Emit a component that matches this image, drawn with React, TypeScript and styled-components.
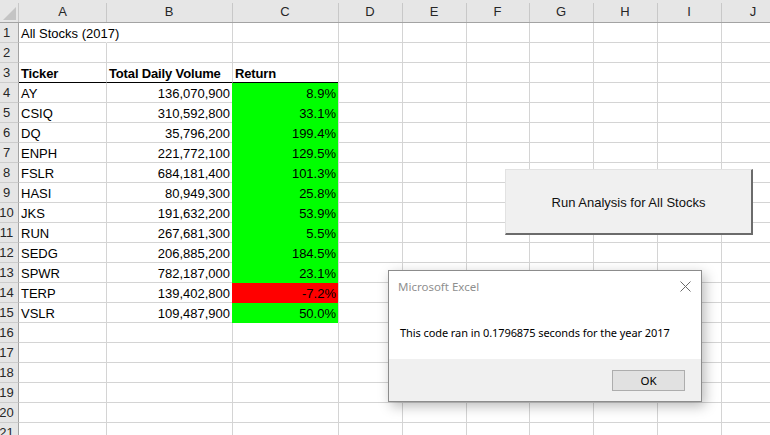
import React from "react";
import styled, { createGlobalStyle } from "styled-components";

const GlobalStyle = createGlobalStyle`
  html, body { margin: 0; padding: 0; background: #ffffff; overflow: hidden; }
  body { font-family: "Liberation Sans", Arial, sans-serif; }
  #root { width: 770px; height: 435px; }
`;

const GRID = "#d4d4d4";
const HEAD_BG = "#e6e6e6";
const HEAD_EDGE = "#a3a3a3";
const HEAD_SEP = "#c8c8c8";
const GREEN = "#00ff00";
const RED = "#ff0000";

type Col = { key: string; width: number };
const COLS: Col[] = [
  { key: "A", width: 87 },
  { key: "B", width: 126 },
  { key: "C", width: 106 },
  { key: "D", width: 64 },
  { key: "E", width: 64 },
  { key: "F", width: 63 },
  { key: "G", width: 64 },
  { key: "H", width: 64 },
  { key: "I", width: 64 },
  { key: "J", width: 64 },
];

type Stock = { ticker: string; volume: string; ret: string };
const STOCKS: Stock[] = [
  { ticker: "AY", volume: "136,070,900", ret: "8.9%" },
  { ticker: "CSIQ", volume: "310,592,800", ret: "33.1%" },
  { ticker: "DQ", volume: "35,796,200", ret: "199.4%" },
  { ticker: "ENPH", volume: "221,772,100", ret: "129.5%" },
  { ticker: "FSLR", volume: "684,181,400", ret: "101.3%" },
  { ticker: "HASI", volume: "80,949,300", ret: "25.8%" },
  { ticker: "JKS", volume: "191,632,200", ret: "53.9%" },
  { ticker: "RUN", volume: "267,681,300", ret: "5.5%" },
  { ticker: "SEDG", volume: "206,885,200", ret: "184.5%" },
  { ticker: "SPWR", volume: "782,187,000", ret: "23.1%" },
  { ticker: "TERP", volume: "139,402,800", ret: "-7.2%" },
  { ticker: "VSLR", volume: "109,487,900", ret: "50.0%" },
];

const Sheet = styled.div`
  position: relative;
  width: 770px;
  height: 435px;
  overflow: hidden;
  background: #ffffff;
`;

const HeaderRow = styled.div`
  display: flex;
  height: 23px;
`;

const Corner = styled.div`
  flex: 0 0 19px;
  width: 19px;
  min-width: 0;
  box-sizing: border-box;
  height: 23px;
  border-bottom: 1px solid ${HEAD_EDGE};
  background: linear-gradient(${HEAD_SEP}, ${HEAD_SEP}) right 3px / 1px calc(100% - 3px) no-repeat, ${HEAD_BG};
  display: flex;
  align-items: flex-start;
  padding: 7px 0 0 3px;
`;

const ColHeader = styled.div<{ $w: number; $first?: boolean }>`
  flex: 0 0 ${(p) => p.$w}px;
  width: ${(p) => p.$w}px;
  min-width: 0;
  box-sizing: border-box;
  height: 23px;
  border-bottom: 1px solid ${HEAD_EDGE};
  background: ${(p) =>
    p.$first
      ? HEAD_BG
      : `linear-gradient(${HEAD_SEP}, ${HEAD_SEP}) left 3px / 1px calc(100% - 3px) no-repeat, ${HEAD_BG}`};
  display: flex;
  align-items: center;
  justify-content: center;
  padding-top: 1px;
  font-size: 13px;
  color: #262626;
`;

const Row = styled.div`
  display: flex;
  height: 20px;
`;

const RowHeader = styled.div`
  flex: 0 0 19px;
  width: 19px;
  min-width: 0;
  box-sizing: border-box;
  height: 20px;
  background: ${HEAD_BG};
  border-right: 1px solid ${HEAD_EDGE};
  border-bottom: 1px solid #cccccc;
  display: flex;
  align-items: center;
  justify-content: center;
  padding-right: 5px;
  font-size: 13px;
  color: #262626;
  white-space: nowrap;
`;

const Cell = styled.div<{
  $w: number;
  $first?: boolean;
  $hideLeft?: boolean;
  $right?: boolean;
  $bold?: boolean;
  $fill?: string;
  $rule?: boolean;
}>`
  flex: 0 0 ${(p) => p.$w}px;
  width: ${(p) => p.$w}px;
  min-width: 0;
  box-sizing: border-box;
  height: 20px;
  border-left: ${(p) =>
    p.$first ? "none" : `1px solid ${p.$fill ? p.$fill : p.$hideLeft ? "transparent" : GRID}`};
  border-bottom: 1px solid ${(p) => (p.$rule ? "#000000" : p.$fill ? p.$fill : GRID)};
  background: ${(p) => p.$fill || "transparent"};
  display: flex;
  align-items: center;
  justify-content: ${(p) => (p.$right ? "flex-end" : "flex-start")};
  padding: 1px 2px 0 2px;
  font-size: 13px;
  font-weight: ${(p) => (p.$bold ? 700 : 400)};
  letter-spacing: ${(p) => (p.$bold ? "-0.15px" : "0")};
  color: #000000;
  white-space: nowrap;
  overflow: visible;
`;

const MacroButton = styled.div`
  position: absolute;
  left: 505px;
  top: 169px;
  width: 248px;
  height: 66px;
  box-sizing: border-box;
  background: #f0f0f0;
  border-top: 1px solid #e2e2e2;
  border-left: 1px solid #e2e2e2;
  border-right: 2px solid #6b6b6b;
  border-bottom: 2px solid #6b6b6b;
  display: flex;
  align-items: center;
  justify-content: center;
  font-size: 13px;
  color: #111111;
  padding-top: 1px;
`;

const Dialog = styled.div`
  position: absolute;
  left: 388px;
  top: 270px;
  width: 314px;
  height: 132px;
  box-sizing: border-box;
  border: 1px solid #8c8c8c;
  background: #ffffff;
  box-shadow: 3px 4px 12px rgba(0, 0, 0, 0.28);
  display: flex;
  flex-direction: column;
  font-family: "Noto Sans", "Liberation Sans", sans-serif;
`;

const TitleBar = styled.div`
  height: 30px;
  display: flex;
  align-items: center;
  justify-content: space-between;
  padding: 0 10px 0 9px;
  font-size: 11.5px;
  color: #8f8f8f;
`;

const DialogBody = styled.div`
  height: 58px;
  box-sizing: border-box;
  display: flex;
  align-items: center;
  padding: 4px 0 0 11px;
  font-size: 11px;
  letter-spacing: -0.08px;
  color: #000000;
`;

const DialogFooter = styled.div`
  height: 42px;
  box-sizing: border-box;
  background: #f0f0f0;
  display: flex;
  justify-content: flex-end;
  align-items: flex-start;
  padding: 11px 16px 0 0;
`;

const OkButton = styled.div`
  width: 73px;
  height: 21px;
  box-sizing: border-box;
  border: 1px solid #adadad;
  background: #e1e1e1;
  display: flex;
  align-items: center;
  justify-content: center;
  font-size: 11.5px;
  color: #000000;
`;

const CornerTriangle = () => (
  <svg width="13" height="13" viewBox="0 0 13 13">
    <polygon points="13,0 13,13 0,13" fill="#c4c4c4" />
  </svg>
);

const CloseIcon = () => (
  <svg width="11" height="11" viewBox="0 0 11 11">
    <path d="M0.5 0.5 L10.5 10.5 M10.5 0.5 L0.5 10.5" stroke="#6a6a6a" strokeWidth="1" fill="none" />
  </svg>
);

type CellSpec = {
  text?: string;
  right?: boolean;
  bold?: boolean;
  fill?: string;
  rule?: boolean;
  hideLeft?: boolean;
};

function buildRows(): CellSpec[][] {
  const rows: CellSpec[][] = [];
  rows.push([{ text: "All Stocks (2017)" }, { hideLeft: true }]);
  rows.push([]);
  rows.push([
    { text: "Ticker", bold: true, rule: true },
    { text: "Total Daily Volume", bold: true, rule: true },
    { text: "Return", bold: true, rule: true },
  ]);
  STOCKS.forEach((s) => {
    const neg = s.ret.startsWith("-");
    rows.push([
      { text: s.ticker },
      { text: s.volume, right: true },
      { text: s.ret, right: true, fill: neg ? RED : GREEN },
    ]);
  });
  for (let i = 0; i < 6; i++) rows.push([]);
  return rows;
}

export default function App() {
  const rows = buildRows();
  return (
    <>
      <GlobalStyle />
      <Sheet>
        <HeaderRow>
          <Corner>
            <CornerTriangle />
          </Corner>
          {COLS.map((c, i) => (
            <ColHeader key={c.key} $w={c.width} $first={i === 0}>
              {c.key}
            </ColHeader>
          ))}
        </HeaderRow>
        {rows.map((cells, r) => (
          <Row key={r}>
            <RowHeader>{r + 1}</RowHeader>
            {COLS.map((c, i) => {
              const spec = cells[i] || {};
              return (
                <Cell
                  key={c.key}
                  $w={c.width}
                  $first={i === 0}
                  $hideLeft={spec.hideLeft}
                  $right={spec.right}
                  $bold={spec.bold}
                  $fill={spec.fill}
                  $rule={spec.rule}
                >
                  {spec.text}
                </Cell>
              );
            })}
          </Row>
        ))}
        <MacroButton>Run Analysis for All Stocks</MacroButton>
        <Dialog>
          <TitleBar>
            <span>Microsoft Excel</span>
            <CloseIcon />
          </TitleBar>
          <DialogBody>This code ran in 0.1796875 seconds for the year 2017</DialogBody>
          <DialogFooter>
            <OkButton>OK</OkButton>
          </DialogFooter>
        </Dialog>
      </Sheet>
    </>
  );
}
